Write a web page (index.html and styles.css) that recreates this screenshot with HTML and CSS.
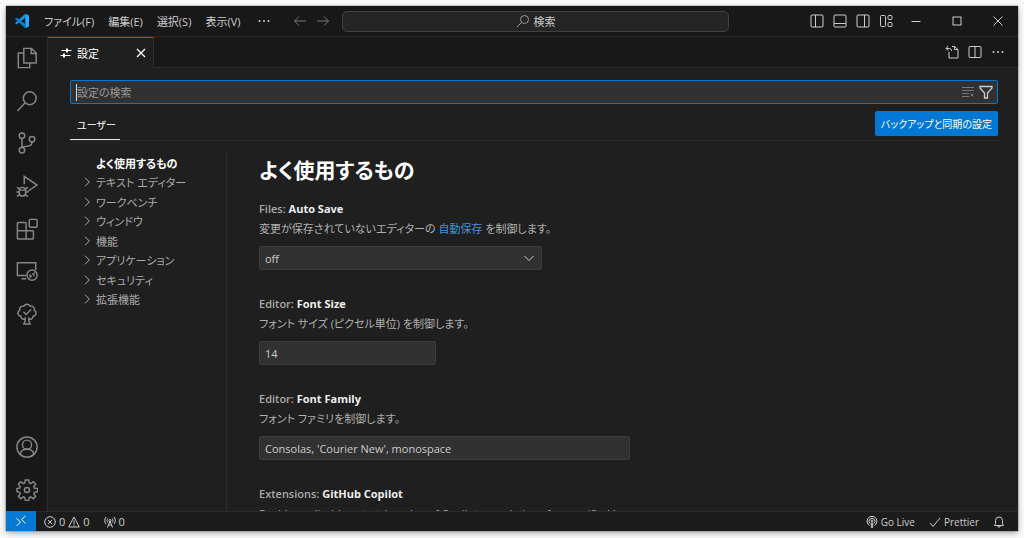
FILE: index.html
```html
<!DOCTYPE html>
<html lang="ja">
<head>
<meta charset="utf-8">
<title>設定 - Visual Studio Code</title>
<link rel="stylesheet" href="styles.css">
</head>
<body>
<div class="window">
  <header class="titlebar">
    <svg class="logo" viewBox="0 0 16 16"><path d="M11.3 .8 15 2.5v11l-3.7 1.7z" fill="#2aa8f5"/><path d="M11.3.8 1 9.9l1.3 1.6L12 4.4z" fill="#1592e0"/><path d="M11.3 15.2 1 6.1l1.3-1.6L12 11.6z" fill="#0b7ccb"/></svg>
    <nav class="menus">
      <button>ファイル(F)</button><button>編集(E)</button><button>選択(S)</button><button>表示(V)</button>
      <button class="dots" aria-label="その他"><svg class="i14" viewBox="0 0 14 14"><g fill="currentColor" stroke="none"><circle cx="2.500" cy="7" r="1"/><circle cx="7" cy="7" r="1"/><circle cx="11.500" cy="7" r="1"/></g></svg></button>
    </nav>
    <div class="history">
      <button aria-label="戻る"><svg class="i14" viewBox="0 0 14 14"><path d="M13 7H1.500M6 2.500 1.500 7 6 11.500"/></svg></button>
      <button aria-label="進む"><svg class="i14" viewBox="0 0 14 14"><path d="M1 7h11.500M8 2.500 12.500 7 8 11.500"/></svg></button>
    </div>
    <button class="command"><svg class="i14" viewBox="0 0 14 14"><circle cx="8.500" cy="5.500" r="4"/><path d="M5.600 8.400 1 13"/></svg>検索</button>
    <div class="layout">
      <button aria-label="サイド バー"><svg class="i14" viewBox="0 0 14 14"><rect x="1" y="1" width="12" height="12" rx="1"/><path d="M5.500 1v12"/></svg></button>
      <button aria-label="パネル"><svg class="i14" viewBox="0 0 14 14"><rect x="1" y="1" width="12" height="12" rx="1"/><path d="M1 9.500h12"/></svg></button>
      <button aria-label="セカンダリ サイド バー"><svg class="i14" viewBox="0 0 14 14"><rect x="1" y="1" width="12" height="12" rx="1"/><path d="M8.500 1v12"/></svg></button>
      <button aria-label="レイアウト"><svg class="i14" viewBox="0 0 14 14"><rect x="1.500" y="1.500" width="5" height="11" rx="1"/><rect x="9" y="1.500" width="4" height="4" rx="1"/><rect x="9" y="8.500" width="4" height="4" rx="1"/></svg></button>
    </div>
    <div class="controls">
      <button aria-label="最小化"><svg class="i10" viewBox="0 0 10 10"><path d="M.5 5.500h9"/></svg></button>
      <button aria-label="最大化"><svg class="i10" viewBox="0 0 10 10"><rect x="1" y="1" width="8" height="8"/></svg></button>
      <button aria-label="閉じる"><svg class="i10" viewBox="0 0 10 10"><path d="m.5.5 9 9M9.500.5l-9 9"/></svg></button>
    </div>
  </header>

  <div class="body">
    <aside class="activity">
      <div class="group top">
        <button aria-label="エクスプローラー"><svg class="i22" viewBox="0 0 24 24"><path d="M8.500 1.500h8.500l5 5v11H8.500zM16.500 1.500V7H22M8.500 6.500h-6v16h12.500v-5"/></svg></button>
        <button aria-label="検索"><svg class="i22" viewBox="0 0 24 24"><circle cx="15" cy="9" r="7"/><path d="M10 14 1.500 23"/></svg></button>
        <button aria-label="ソース管理"><svg class="i22" viewBox="0 0 24 24"><circle cx="6.500" cy="4" r="3"/><circle cx="6.500" cy="20" r="3"/><circle cx="17.500" cy="8" r="3"/><path d="M6.500 7v10M17.500 11c0 4-3 4.500-5.500 4.500S7.500 15.500 6.500 17"/></svg></button>
        <button aria-label="実行とデバッグ"><svg class="i22" viewBox="0 0 24 24"><path d="M9 10V1.500L23 11l-10.500 7"/><path d="M3.500 17a3.500 3.500 0 0 1 7 0v2.500a3.500 3.500 0 0 1-7 0zM3.500 16.500h7M.5 18.500h3M10.500 18.500h3M1 13.500l3 2M13 13.500l-3 2M1 23.500 4 21M13 23.500 10 21"/></svg></button>
        <button aria-label="拡張機能"><svg class="i22" viewBox="0 0 24 24"><path d="M2.500 5h7.500a1 1 0 0 1 1 1v8h7a1 1 0 0 1 1 1v7a1 1 0 0 1-1 1H2.500a1 1 0 0 1-1-1V6a1 1 0 0 1 1-1zM1.500 14H11v9"/><rect x="14.500" y="1.500" width="8.500" height="8.500" rx="1"/></svg></button>
        <button aria-label="リモート エクスプローラー"><svg class="i22" viewBox="0 0 24 24"><path d="M11 17H1.500V3h20v8M6 20.500h5"/><circle cx="17.500" cy="16.500" r="5.500"/><path d="m14.500 16 2 1.500-1.500 2M20.500 14l-2 1.500 1.500 2"/></svg></button>
        <button aria-label="TODO ツリー"><svg class="i22" viewBox="0 0 24 24"><path d="M10 17.500c-3 1-5-1-4.500-3C1.500 14 1 9.500 4 8c-.5-3.500 2-5 4.500-4.500 2-3 6-2.500 7 0 3-.5 5 1.500 4.500 4.500 3 1.500 2.500 6-1.500 6.500 0 2.500-2 4-4.500 3M10 15.500v4L8.500 23h7L14 19.500v-4M8 9.500l3 3 5.500-5.500"/></svg></button>
      </div>
      <div class="group bottom">
        <button aria-label="アカウント"><svg class="i22" viewBox="0 0 24 24"><circle cx="12" cy="12" r="11"/><circle cx="12" cy="9.500" r="5"/><path d="M4.500 20c.5-4 3.500-5.500 7.500-5.500s7 1.500 7.500 5.500"/></svg></button>
        <button aria-label="管理"><svg class="i22" viewBox="0 0 24 24"><path d="M10.100 1h3.800l.6 3.400 1.400.6 2.900-2 2.600 2.600-2 2.900.6 1.400 3.500.6v3.400l-3.500.7-.6 1.400 2 2.900-2.600 2.600-2.900-2-1.400.6-.6 3.400h-3.800l-.6-3.400-1.400-.6-2.900 2-2.600-2.600 2-2.900-.6-1.400L1 13.900v-3.400l3-.6.6-1.400-2-2.900L5.200 3l2.900 2 1.400-.6z"/><circle cx="12" cy="12" r="2.800"/></svg></button>
      </div>
    </aside>

    <main class="editor">
      <div class="tabs">
        <div class="tab">
          <svg class="i12" viewBox="0 0 12 12"><path d="M1.500 3.500h10M.5 8.500h10"/><path d="M7 1.500v4M4 6.500v4" stroke-width="2"/></svg>
          <span>設定</span>
          <button aria-label="タブを閉じる"><svg class="i10" viewBox="0 0 10 10"><path d="m1 1 8 8M9 1 1 9" stroke-width="1.300"/></svg></button>
        </div>
        <div class="actions">
          <button aria-label="設定 (JSON) を開く"><svg class="i14" viewBox="0 0 14 14"><path d="M4 7v6h9V4.500L9.500 1.500H7M9.500 1.500v3H13M3 1 1 3.500 3.500 5.500M1 3.500h3.500C6 3.500 6.500 4.500 6.500 6"/></svg></button>
          <button aria-label="エディターを分割"><svg class="i14" viewBox="0 0 14 14"><rect x="1" y="1.500" width="12" height="11" rx="1"/><path d="M7 1.500v11"/></svg></button>
          <button aria-label="その他の操作"><svg class="i14" viewBox="0 0 14 14"><g fill="currentColor" stroke="none"><circle cx="2.500" cy="7" r="1"/><circle cx="7" cy="7" r="1"/><circle cx="11.500" cy="7" r="1"/></g></svg></button>
        </div>
      </div>

      <div class="settings">
        <div class="search">
          <i class="caret"></i>
          <input type="text" aria-label="設定の検索" placeholder="設定の検索">
          <button class="dim" aria-label="クリア"><svg class="i14" viewBox="0 0 14 14"><path d="M1 2.500h12M1 5.500h12M1 8.500h7M1 11.500h7M9.500 8.500l3 3M12.500 8.500l-3 3"/></svg></button>
          <button aria-label="フィルター"><svg class="i14 filter" viewBox="0 0 14 14"><path d="M1 1.500h12v1.500L8.500 8v5h-3V8L1 3z"/></svg></button>
        </div>
        <div class="scope">
          <button class="user">ユーザー</button>
          <button class="sync">バックアップと同期の設定</button>
        </div>
        <div class="columns">
          <nav class="toc">
            <ul>
              <li class="current">よく使用するもの</li>
              <li><svg class="i10" viewBox="0 0 10 10"><path d="m3 .7 4.300 4.300L3 9.300"/></svg>テキスト エディター</li>
              <li><svg class="i10" viewBox="0 0 10 10"><path d="m3 .7 4.300 4.300L3 9.300"/></svg>ワークベンチ</li>
              <li><svg class="i10" viewBox="0 0 10 10"><path d="m3 .7 4.300 4.300L3 9.300"/></svg>ウィンドウ</li>
              <li><svg class="i10" viewBox="0 0 10 10"><path d="m3 .7 4.300 4.300L3 9.300"/></svg>機能</li>
              <li><svg class="i10" viewBox="0 0 10 10"><path d="m3 .7 4.300 4.300L3 9.300"/></svg>アプリケーション</li>
              <li><svg class="i10" viewBox="0 0 10 10"><path d="m3 .7 4.300 4.300L3 9.300"/></svg>セキュリティ</li>
              <li><svg class="i10" viewBox="0 0 10 10"><path d="m3 .7 4.300 4.300L3 9.300"/></svg>拡張機能</li>
            </ul>
          </nav>
          <section class="list">
            <h1>よく使用するもの</h1>
            <div class="item">
              <label for="autosave">Files: <b>Auto Save</b></label>
              <p>変更が保存されていないエディターの <a href="#autosave">自動保存</a> を制御します。</p>
              <div class="select"><select id="autosave"><option>off</option></select><svg class="i12" viewBox="0 0 12 12"><path d="m1.500 4 4.500 4.500L10.500 4"/></svg></div>
            </div>
            <div class="item">
              <label for="size">Editor: <b>Font Size</b></label>
              <p>フォント サイズ (ピクセル単位) を制御します。</p>
              <input class="short" id="size" type="text" value="14">
            </div>
            <div class="item">
              <label for="family">Editor: <b>Font Family</b></label>
              <p>フォント ファミリを制御します。</p>
              <input class="long" id="family" type="text" value="Consolas, 'Courier New', monospace">
            </div>
            <div class="item">
              <h2>Extensions: <b>GitHub Copilot</b></h2>
              <p>Enable or disable auto triggering of Copilot completions for specified languages</p>
            </div>
          </section>
        </div>
      </div>
    </main>
  </div>

  <footer class="status">
    <button class="remote" aria-label="リモート ウィンドウ"><svg class="i12" viewBox="0 0 12 12"><path d="m1.500 3.500 4 3.500-4 4M10.500 1l-4 3.500 4 4"/></svg></button>
    <button class="problems"><svg class="i12" viewBox="0 0 12 12"><circle cx="6" cy="6" r="5.300"/><path d="m3.800 3.800 4.400 4.400M8.200 3.800 3.800 8.200"/></svg>0<svg class="i12" viewBox="0 0 12 12"><path d="m6 1 5.300 10H.7zM6 4.500v3.300M6 8.500v1.300"/></svg>0</button>
    <button class="ports"><svg class="i12" viewBox="0 0 12 12"><path d="M6 5 3.500 11.500M6 5l2.500 6.500M4.500 9h3M3.800 2.500c-1 1.500-1 2.500 0 4M8.200 2.500c1 1.500 1 2.500 0 4M2 1C.3 3.500.3 5.500 2 8M10 1c1.700 2.500 1.700 4.500 0 7"/><circle cx="6" cy="4.500" r="1"/></svg>0</button>
    <button class="live"><svg class="i12" viewBox="0 0 12 12"><path d="M3.500 9.500a4.900 4.900 0 1 1 5 0M4 7.500a3 3 0 1 1 4 0M5.300 7h1.400v4.500H5.300z"/><circle cx="6" cy="5" r="1"/></svg>Go Live</button>
    <button class="pretty"><svg class="i12" viewBox="0 0 12 12"><path d="m1 7 3 3.500L11 2"/></svg>Prettier</button>
    <button aria-label="通知"><svg class="i12" viewBox="0 0 12 12"><path d="M1.500 9.500h9L9.500 7.500V4.500a3.500 3.500 0 0 0-7 0v3zM4.800 10a1.200 1.200 0 0 0 2.400 0"/></svg></button>
  </footer>
</div>
</body>
</html>
```
FILE: styles.css
```css
* { box-sizing: border-box; }

body {
  margin: 0;
  height: 100vh;
  padding: 6px 6px 7px;
  background: #fbfbfb;
  color: #ccc;
  font-family: "Open Sans", "Noto Sans CJK JP", sans-serif;
  font-size: 11px;
  font-feature-settings: "palt";
}

button, input, select {
  margin: 0;
  padding: 0;
  border: 0;
  background: none;
  color: inherit;
  font: inherit;
  font-feature-settings: inherit;
}

button {
  display: flex;
  align-items: center;
  justify-content: center;
  flex: none;
  white-space: nowrap;
}

svg {
  flex: none;
  display: block;
  fill: none;
  stroke: currentColor;
  stroke-width: 1;
}

.i10 { width: 10px; height: 10px; }
.i12 { width: 12px; height: 12px; }
.i14 { width: 14px; height: 14px; }
.i22 { width: 22px; height: 22px; stroke-width: 1.6; }
.filter { stroke-width: 1.3; }

.window {
  display: flex;
  flex-direction: column;
  height: 100%;
  background: #1f1f1f;
  box-shadow: 0 0 1px #333, 0 2px 6px rgba(0, 0, 0, .35);
}

/* Title bar */
.titlebar {
  display: flex;
  align-items: center;
  flex: none;
  height: 31px;
  padding-left: 8px;
  background: #181818;
  border-bottom: 1px solid #2b2b2b;
}

.logo { width: 16px; height: 16px; stroke: none; }
.menus { display: flex; gap: 14px; margin-left: 14px; }
.dots { margin-left: 3px; }
.history { display: flex; gap: 9px; margin-left: 22px; color: #777; }

.command {
  flex: 0 1 387px;
  height: 21px;
  margin-left: 12px;
  gap: 3px;
  background: #252525;
  border: 1px solid #414141;
  border-radius: 5px;
}

.command svg { color: #999; }
.layout { display: flex; gap: 9px; margin-left: auto; }
.controls { display: flex; margin-left: 2px; }
.controls button { width: 41px; }

.body { display: flex; flex: 1; min-height: 0; }

/* Activity bar */
.activity {
  display: flex;
  flex-direction: column;
  justify-content: space-between;
  flex: none;
  width: 42px;
  background: #181818;
  border-right: 1px solid #2b2b2b;
  color: #868686;
}

.group { display: grid; grid-auto-rows: 1fr; }
.top { height: 298px; }
.bottom { height: 85px; }

.editor { display: flex; flex-direction: column; flex: 1; min-width: 0; }

/* Editor tabs */
.tabs {
  display: flex;
  flex: none;
  height: 31px;
  background: #181818;
}

.tab {
  display: flex;
  align-items: center;
  width: 106px;
  padding: 0 7px 0 12px;
  gap: 5px;
  background: #1f1f1f;
  border-top: 1px solid #0078d4;
  border-right: 1px solid #2b2b2b;
  color: #fff;
}

.tab button { margin-left: auto; }

.actions {
  display: flex;
  align-items: center;
  justify-content: flex-end;
  flex: 1;
  gap: 9px;
  padding-right: 13px;
  border-bottom: 1px solid #2b2b2b;
}

/* Settings editor */
.settings {
  display: flex;
  flex-direction: column;
  flex: 1;
  min-height: 0;
  padding: 12px 20px 0 22px;
}

.search {
  display: flex;
  align-items: center;
  flex: none;
  height: 24px;
  gap: 4px;
  padding: 0 4px 0 5px;
  background: #313131;
  border: 1px solid #0078d4;
  border-radius: 2px;
}

.search input { flex: 1; min-width: 0; height: 20px; margin-left: -4px; outline: 0; }
.search input::placeholder { color: #989898; opacity: 1; }
.caret { width: 1px; height: 17px; background: #ddd; }
.dim { color: #777; }

.scope {
  display: flex;
  justify-content: space-between;
  align-items: flex-end;
  flex: none;
  height: 37px;
  border-bottom: 1px solid #2b2b2b;
}

.user {
  height: 30px;
  padding: 0 4px 0 7px;
  border-bottom: 1px solid #e7e7e7;
  color: #fff;
  font-size: 10px;
}

.sync {
  height: 25px;
  margin-bottom: 4px;
  padding: 0 6px;
  background: #0078d4;
  border-radius: 2px;
  color: #fff;
  font-size: 10px;
}

.columns { display: flex; flex: 1; min-height: 0; padding-top: 12px; }

.toc { flex: none; width: 157px; border-right: 1px solid #2b2b2b; }

.toc ul {
  display: grid;
  grid-auto-rows: 1fr;
  height: 156px;
  margin: 0;
  padding: 0 0 0 12px;
  list-style: none;
  color: #aaa;
}

.toc li { display: flex; align-items: center; gap: 4px; white-space: nowrap; }
.toc .current { padding-left: 14px; color: #fff; font-weight: 700; }

.list { flex: 1; min-width: 0; padding-left: 32px; overflow: hidden; }

h1 {
  margin: 0 0 12px;
  color: #fff;
  font-size: 21px;
  font-weight: 600;
  line-height: 34px;
}

.item { margin-bottom: 24px; }
.item label, h2 { display: block; margin: 0; font-size: 11px; font-weight: 600; line-height: 20px; color: #aaa; }
.item b { color: #eee; font-weight: 700; }
.item p { margin: 0 0 7px; line-height: 20px; color: #b0b0b0; white-space: nowrap; }
.item a { color: #4593d8; text-decoration: none; }

.item input, .item select {
  display: block;
  width: 100%;
  height: 24px;
  padding: 0 5px;
  background: #313131;
  border: 1px solid #3c3c3c;
  border-radius: 2px;
  appearance: none;
}

.select { display: grid; align-items: center; max-width: 283px; }
.select select, .select svg { grid-area: 1 / 1; }
.select svg { justify-self: end; margin-right: 7px; pointer-events: none; }
.item .short { max-width: 177px; }
.item .long { max-width: 371px; }

/* Status bar */
.status {
  display: flex;
  flex: none;
  height: 20px;
  padding-right: 13px;
  background: #1c1c1c;
  border-top: 1px solid #2b2b2b;
}

.status button { gap: 3px; }
.status .live, .status .pretty { font-size: 10px; }
.remote { width: 30px; margin-top: -1px; background: #0078d4; color: #fff; }
.problems { margin-left: 8px; }
.ports { margin-left: 14px; }
.live { margin-left: auto; }
.pretty { margin: 0 14px; }
```
